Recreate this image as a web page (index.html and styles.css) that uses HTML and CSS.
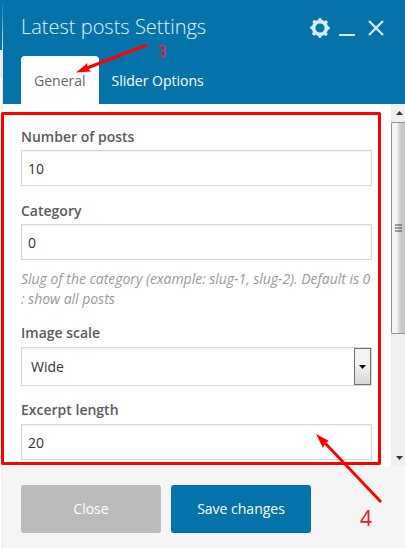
FILE: index.html
```html
<!DOCTYPE html>
<html lang="en">
<head>
<meta charset="utf-8">
<title>Latest posts Settings</title>
<link rel="stylesheet" href="styles.css">
</head>
<body>
<div class="screen">
  <div class="page-edge"></div>
  <section class="dialog">
    <header class="header">
      <div class="titlebar">
        <h1 class="title">Latest posts Settings</h1>
        <div class="controls">
          <svg class="gear" width="20" height="20" viewBox="0 0 20 20"><circle cx="10" cy="10" r="6.4" fill="none" stroke="#d9ebf5" stroke-width="3.6"/><circle cx="10" cy="10" r="8.2" fill="none" stroke="#d9ebf5" stroke-width="3.6" stroke-linecap="round" stroke-dasharray="0.01 6.43" transform="rotate(-90 10 10)"/></svg>
          <svg class="minimize" width="16" height="20" viewBox="0 0 16 20"><path d="M0 17h16" stroke="#d9ebf5" stroke-width="2"/></svg>
          <svg class="close-icon" width="16" height="20" viewBox="0 0 16 20"><path d="M1 3l14 14M15 3L1 17" stroke="#d9ebf5" stroke-width="2.2"/></svg>
        </div>
      </div>
      <nav class="tabs">
        <a class="tab active">General</a>
        <a class="tab">Slider Options</a>
      </nav>
    </header>
    <main class="body">
      <form class="form">
        <div class="field">
          <label class="label">Number of posts</label>
          <div class="input">10</div>
        </div>
        <div class="field">
          <label class="label">Category</label>
          <div class="input">0</div>
          <p class="hint">Slug of the category (example: slug-1, slug-2). Default is 0<br>: show all posts</p>
        </div>
        <div class="field">
          <label class="label">Image scale</label>
          <div class="input select"><span>Wide</span><span class="drop"><svg width="7" height="4" viewBox="0 0 7 4"><path d="M0 0h7L3.5 4z"/></svg></span></div>
        </div>
        <div class="field">
          <label class="label">Excerpt length</label>
          <div class="input">20</div>
        </div>
      </form>
      <div class="scrollbar">
        <div class="scroll-btn"><svg width="7" height="4" viewBox="0 0 7 4"><path d="M0 4h7L3.5 0z" fill="#333"/></svg></div>
        <div class="thumb"><svg width="8" height="8" viewBox="0 0 8 8"><path d="M0 1h7M0 4h7M0 7h7" stroke="#444" stroke-width="1.2"/></svg></div>
        <div class="scroll-btn down"><svg width="7" height="4" viewBox="0 0 7 4"><path d="M0 0h7L3.5 4z" fill="#333"/></svg></div>
      </div>
    </main>
    <footer class="footer">
      <button class="btn secondary">Close</button>
      <button class="btn primary">Save changes</button>
    </footer>
  </section>
  <svg class="marks" width="405" height="548" viewBox="0 0 405 548">
    <rect x="2.5" y="113.5" width="377" height="350" fill="none" stroke="#f00" stroke-width="3" stroke-linejoin="round"/>
    <path d="M147 45L87 68" stroke="#f00" stroke-width="3"/>
    <path d="M76 72.5L87.5 63L87 67.5L91 71.5z" fill="#f00"/>
    <path d="M381 502L325 443" stroke="#f00" stroke-width="2.8"/>
    <path d="M316 434L329 441L325 443L323 448z" fill="#f00"/>
    <text class="mark-three" transform="translate(157.5 57) scale(.88 1)">3</text>
    <text class="mark-four" x="360" y="526">4</text>
  </svg>
</div>
</body>
</html>
```
FILE: styles.css
```css
* { box-sizing: border-box; }
body { margin: 0; font: 14px/20px "Open Sans", sans-serif; color: #333; background: #fff; }
.screen { position: relative; display: flex; width: 405px; height: 548px; overflow: hidden; }
.page-edge { width: 3px; border-top: 50px solid #0272aa; border-right: 1px solid #e9e9e9; background: linear-gradient(#eee 28px, #fcfcfc 28px); }
.dialog { flex: 1; display: flex; flex-direction: column; min-width: 0; }
.header { height: 104px; background: #0473aa; padding-left: 18px; display: flex; flex-direction: column; justify-content: space-between; }
.titlebar { display: flex; justify-content: space-between; padding: 13px 21px 0 0; }
.title { margin: 0; font-size: 20px; line-height: 28px; font-weight: 300; color: #e4f3fa; white-space: nowrap; }
.controls { display: flex; padding-top: 5px; }
.minimize { margin-left: 9px; }
.close-icon { margin-left: 13px; }
.tabs { display: flex; height: 48px; }
.tab { padding: 15px 12px 0 12.5px; color: #fff; white-space: nowrap; }
.tab.active { width: 78px; padding-left: 13px; background: #fff; color: #666; border-radius: 4px 4px 0 0; }
.body { height: 363px; display: flex; overflow: hidden; background: #fff; }
.form { width: 388px; padding: 23px 19px 0 18px; }
.field { margin-bottom: 15px; }
.label { display: block; font-weight: 600; color: #5b5b5b; margin-bottom: 3px; }
.input { display: flex; align-items: center; height: 36px; border: 1px solid #d8d8d8; padding: 2px 6px 0; box-shadow: inset 0 1px 2px #f0f0f0; }
.hint { margin: 9px 0 13px; font-style: italic; color: #999; white-space: nowrap; letter-spacing: -.02px; }
.select { height: 39px; padding: 0 0 0 9px; justify-content: space-between; }
.field:nth-child(2) { margin-bottom: 15px; }
.field:nth-child(2) .hint { margin-bottom: 14px; }
.field:nth-child(3) { margin-top: -1px; }
.field:nth-child(3) .label { margin-bottom: 4px; }
.field:nth-child(3) { margin-bottom: 14px; }
.field:nth-child(4) .label { margin-bottom: 4px; }
.drop { display: flex; align-items: center; justify-content: center; width: 17px; height: 37px; border: 1px solid #707070; background: linear-gradient(#f3f3f3 45%, #d6d6d6); }
.scrollbar { width: 14px; display: flex; flex-direction: column; background: #f0f0f0; }
.scroll-btn { height: 18px; display: flex; align-items: center; justify-content: center; padding-left: 2px; }
.scroll-btn.down { margin-top: auto; }
.thumb { height: 212px; display: flex; align-items: center; justify-content: center; border: 1px solid #8f8f8f; border-right: 0; border-radius: 2px 0 0 2px; background: linear-gradient(90deg, #f5f5f5 35%, #d0d0d0 60%, #c4c4c4); }
.footer { height: 81px; padding: 18px 18px 0; display: flex; gap: 10px; background: #f5f5f5; }
.btn { width: 140px; height: 48px; border: 0; border-radius: 3px; padding: 0; font: inherit; color: #fff; }
.secondary { background: #bbb; }
.primary { background: #0473aa; }
.marks { position: absolute; left: 0; top: 0; pointer-events: none; }
.mark-three { font: 16px "DejaVu Sans", sans-serif; fill: #ed1c3c; stroke: #ed1c3c; stroke-width: .3; }
.mark-four { font: 21px "Noto Sans", sans-serif; fill: #ed1c24; }
```
